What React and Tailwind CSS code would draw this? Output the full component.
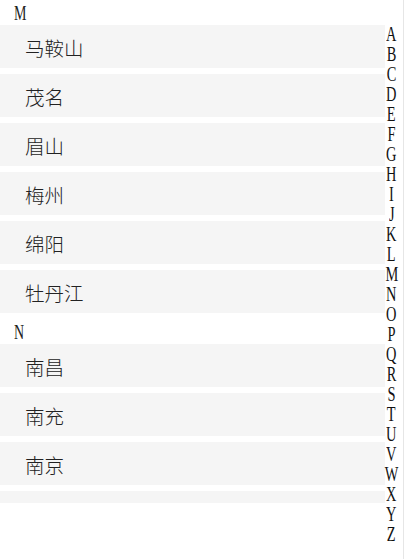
import React from "react";

const sections = [
  { key: "M", items: ["马鞍山", "茂名", "眉山", "梅州", "绵阳", "牡丹江"] },
  { key: "N", items: ["南昌", "南充", "南京", ""] },
];

const letters = "ABCDEFGHIJKLMNOPQRSTUVWXYZ".split("");

export default function App() {
  return (
    <div className="flex h-[559px] w-[408px] bg-white overflow-hidden">
      <div className="flex-1 h-[503px] overflow-hidden">
        {sections.map((s) => (
          <div key={s.key}>
            <div className="h-[25px] flex items-center pl-[14px]">
              <span
                className="inline-block origin-left scale-x-[0.7] text-[20px] leading-none text-[#222]"
                style={{ fontFamily: '"Liberation Serif", serif' }}
              >
                {s.key}
              </span>
            </div>
            {s.items.map((name, i) => (
              <div
                key={i}
                className="h-[43px] mb-[6px] bg-[#f5f5f5] flex items-center pl-[25px] pt-[3px] text-[19.5px] text-[#222]"
                style={{ fontFamily: '"Noto Sans CJK SC", sans-serif', fontWeight: 300 }}
              >
                {name}
              </div>
            ))}
          </div>
        ))}
      </div>
      <div className="w-[18px] pt-[24px] pr-[5px] flex flex-col items-center">
        {letters.map((l) => (
          <span
            key={l}
            className="block h-[20px] leading-[20px] text-[20px] text-[#111] scale-x-[0.72]"
            style={{ fontFamily: '"Liberation Serif", serif' }}
          >
            {l}
          </span>
        ))}
      </div>
      <div className="w-[5px] border-l border-[#e6e6e6]" />
    </div>
  );
}
